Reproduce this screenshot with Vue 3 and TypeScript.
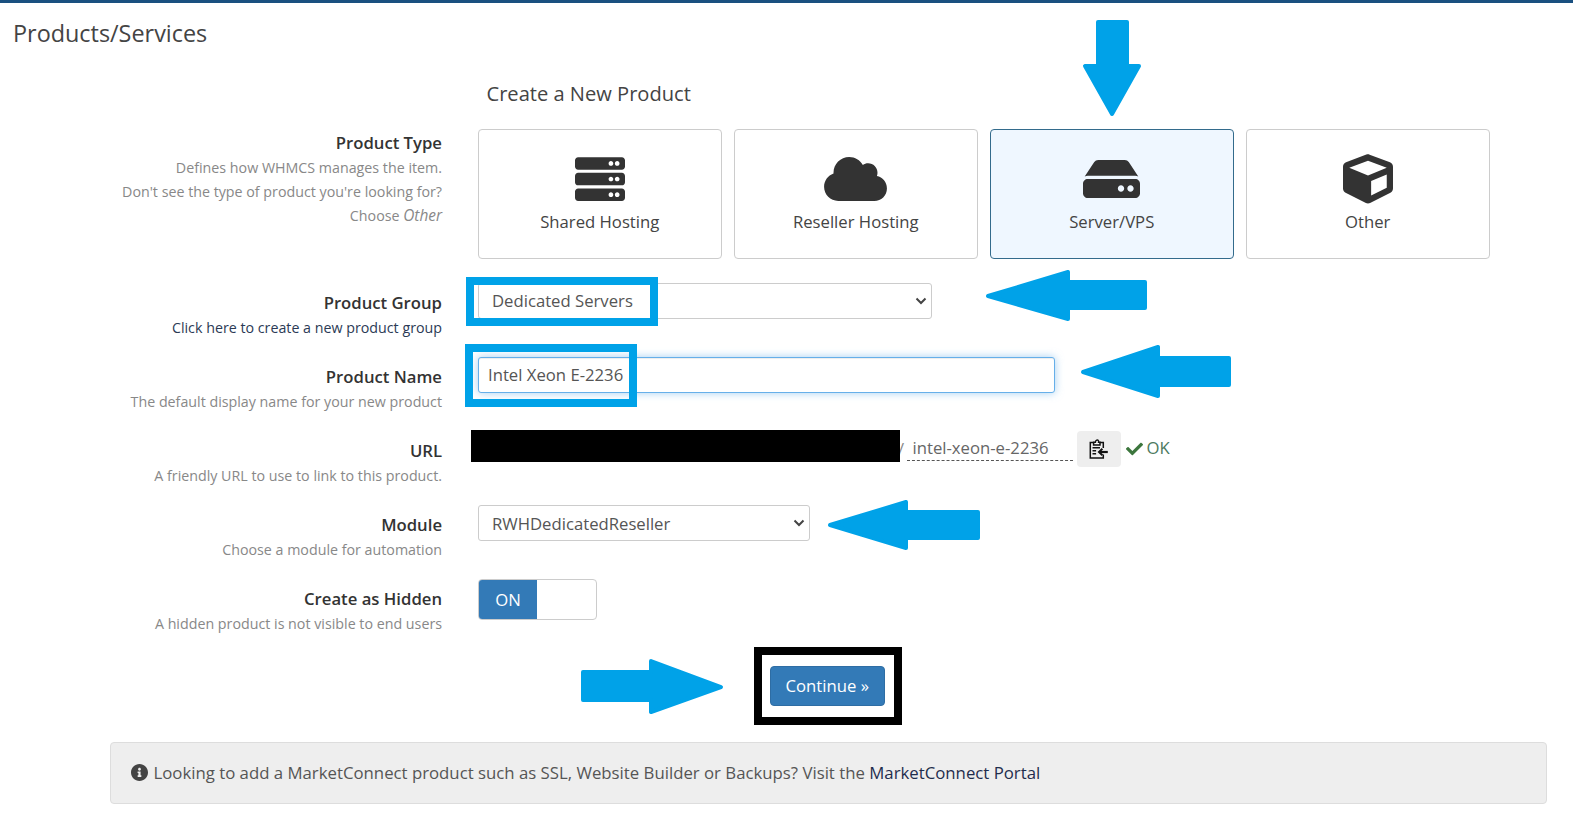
<script setup lang="ts">
interface Card { label: string; icon: string; view: string; w: number; h: number; active?: boolean }
const server = "M480 160H32c-17.673 0-32-14.327-32-32V64c0-17.673 14.327-32 32-32h448c17.673 0 32 14.327 32 32v64c0 17.673-14.327 32-32 32zm-48-88c-13.255 0-24 10.745-24 24s10.745 24 24 24 24-10.745 24-24-10.745-24-24-24zm-64 0c-13.255 0-24 10.745-24 24s10.745 24 24 24 24-10.745 24-24-10.745-24-24-24zm112 248H32c-17.673 0-32-14.327-32-32v-64c0-17.673 14.327-32 32-32h448c17.673 0 32 14.327 32 32v64c0 17.673-14.327 32-32 32zm-48-88c-13.255 0-24 10.745-24 24s10.745 24 24 24 24-10.745 24-24-10.745-24-24-24zm-64 0c-13.255 0-24 10.745-24 24s10.745 24 24 24 24-10.745 24-24-10.745-24-24-24zm112 248H32c-17.673 0-32-14.327-32-32v-64c0-17.673 14.327-32 32-32h448c17.673 0 32 14.327 32 32v64c0 17.673-14.327 32-32 32zm-48-88c-13.255 0-24 10.745-24 24s10.745 24 24 24 24-10.745 24-24-10.745-24-24-24zm-64 0c-13.255 0-24 10.745-24 24s10.745 24 24 24 24-10.745 24-24-10.745-24-24-24z";
const cloud = "M537.6 226.6c4.1-10.7 6.4-22.4 6.4-34.6 0-53-43-96-96-96-19.7 0-38.1 6-53.3 16.2C367 64.2 315.3 32 256 32c-88.4 0-160 71.6-160 160 0 2.7.1 5.4.2 8.1C40.2 219.8 0 273.2 0 336c0 79.5 64.5 144 144 144h368c70.7 0 128-57.3 128-128 0-61.9-44-113.6-102.4-125.4z";
const hdd = "M576 304v96c0 26.51-21.49 48-48 48H48c-26.51 0-48-21.49-48-48v-96c0-26.51 21.49-48 48-48h480c26.51 0 48 21.49 48 48zm-48-80a79.557 79.557 0 0 1 30.777 6.165L462.25 85.374A48.003 48.003 0 0 0 422.311 64H153.689a48 48 0 0 0-39.938 21.374L17.223 230.165A79.557 79.557 0 0 1 48 224h480zm-48 96c-17.673 0-32 14.327-32 32s14.327 32 32 32 32-14.327 32-32-14.327-32-32-32zm-96 0c-17.673 0-32 14.327-32 32s14.327 32 32 32 32-14.327 32-32-14.327-32-32-32z";
const cube = "M239.1 6.3l-208 78c-18.7 7-31.1 25-31.1 45v225.1c0 18.2 10.3 34.8 26.5 42.9l208 104c13.5 6.8 29.4 6.8 42.9 0l208-104c16.3-8.1 26.5-24.8 26.5-42.9V129.3c0-20-12.4-37.9-31.1-44.9l-208-78C262 2.2 250 2.2 239.1 6.3zM256 68.4l192 72v1.1l-192 78-192-78v-1.1l192-72zm32 356V275.5l160-65v133.9l-160 80z";
const cards: Card[] = [
  { label: "Shared Hosting", icon: server, view: "0 32 512 448", w: 50, h: 44 },
  { label: "Reseller Hosting", icon: cloud, view: "0 32 640 448", w: 63, h: 44 },
  { label: "Server/VPS", icon: hdd, view: "0 64 576 384", w: 57, h: 38, active: true },
  { label: "Other", icon: cube, view: "0 0 512 512", w: 50, h: 50 },
];
const arrows: string[] = [
  "1098,22 1127,22 1127,66 1139,66 1112,114 1085,66 1098,66",
  "988,296 1068,272 1068,282 1145,282 1145,308 1068,308 1068,319",
  "1083,372 1158,347 1158,358 1229,358 1229,385 1158,385 1158,396",
  "830,525 906,502 906,512 978,512 978,538 906,538 906,548",
  "583,672 651,672 651,661 721,687 651,712 651,700 583,700",
];
</script>

<template>
  <div class="page">
    <div class="topbar"></div>
    <h1 class="title">Products/Services</h1>
    <h2 class="subtitle">Create a New Product</h2>

    <div class="row row-type">
      <div class="lab">
        <div class="lab-title">Product Type</div>
        <div class="lab-desc">Defines how WHMCS manages the item.</div>
        <div class="lab-desc">Don't see the type of product you're looking for?</div>
        <div class="lab-desc">Choose <em>Other</em></div>
      </div>
      <div class="cards">
        <div v-for="c in cards" :key="c.label" class="card" :class="{ active: c.active }">
          <div class="card-icon">
            <svg :width="c.w" :height="c.h" :viewBox="c.view" fill="#333"><path :d="c.icon" /></svg>
          </div>
          <div class="card-label">{{ c.label }}</div>
        </div>
      </div>
    </div>

    <div class="row">
      <div class="lab">
        <div class="lab-title">Product Group</div>
        <div class="lab-desc link">Click here to create a new product group</div>
      </div>
      <select class="ctl sel-group"><option>Dedicated Servers</option></select>
    </div>

    <div class="row">
      <div class="lab">
        <div class="lab-title">Product Name</div>
        <div class="lab-desc">The default display name for your new product</div>
      </div>
      <input class="ctl inp-name" type="text" value="Intel Xeon E-2236" />
    </div>

    <div class="row">
      <div class="lab">
        <div class="lab-title">URL</div>
        <div class="lab-desc">A friendly URL to use to link to this product.</div>
      </div>
      <div class="url">
        <div class="redact"></div>
        <span class="slash">/</span>
        <span class="slug">intel-xeon-e-2236</span>
        <button class="copy" type="button" aria-label="Copy">
          <svg width="19" height="20" viewBox="0 0 19 20" fill="none" stroke="#111" stroke-width="1.5">
            <path d="M4.6 3.5H1.3v15.4h13v-3.4M14.3 9V3.5H11" />
            <path d="M4.6 6V3.2h1.8a2 2 0 0 1 2.6-2 2 2 0 0 1 .6 2H11V6z" fill="#fff" />
            <path d="M3.5 8.8h7.5M3.5 11.8h3.6M3.5 14.8h3.6" />
            <path d="M18.8 13H10.5" stroke-width="2.2" />
            <path d="M13.4 9.8L10 13l3.4 3.2" stroke-width="2" />
          </svg>
        </button>
        <svg class="check" width="17" height="14" viewBox="0 60 512 392" fill="#3c763d"><path d="M173.898 439.404l-166.4-166.4c-9.997-9.997-9.997-26.206 0-36.204l36.203-36.204c9.997-9.998 26.207-9.998 36.204 0L192 312.69 432.095 72.596c9.997-9.997 26.207-9.997 36.204 0l36.203 36.204c9.997 9.997 9.997 26.206 0 36.204l-294.4 294.401c-9.998 9.997-26.207 9.997-36.204-.001z" /></svg>
        <span class="ok">OK</span>
      </div>
    </div>

    <div class="row">
      <div class="lab">
        <div class="lab-title">Module</div>
        <div class="lab-desc">Choose a module for automation</div>
      </div>
      <select class="ctl sel-module"><option>RWHDedicatedReseller</option></select>
    </div>

    <div class="row">
      <div class="lab">
        <div class="lab-title">Create as Hidden</div>
        <div class="lab-desc">A hidden product is not visible to end users</div>
      </div>
      <div class="toggle">
        <span class="toggle-on">ON</span>
      </div>
    </div>

    <div class="actions">
      <button class="continue" type="button">Continue »</button>
    </div>

    <div class="info">
      <svg width="17" height="17" viewBox="8 8 496 496" fill="#444"><path d="M256 8C119.043 8 8 119.083 8 256c0 136.997 111.043 248 248 248s248-111.003 248-248C504 119.083 392.957 8 256 8zm0 110c23.196 0 42 18.804 42 42s-18.804 42-42 42-42-18.804-42-42 18.804-42 42-42zm56 254c0 6.627-5.373 12-12 12h-88c-6.627 0-12-5.373-12-12v-24c0-6.627 5.373-12 12-12h12v-64h-12c-6.627 0-12-5.373-12-12v-24c0-6.627 5.373-12 12-12h64c6.627 0 12 5.373 12 12v100h12c6.627 0 12 5.373 12 12v24z" /></svg>
      <span class="info-text">Looking to add a MarketConnect product such as SSL, Website Builder or Backups? Visit the <span class="portal">MarketConnect Portal</span></span>
    </div>

    <div class="mark mark-group"></div>
    <div class="mark mark-name"></div>
    <div class="mark mark-continue"></div>
    <svg class="arrows" width="1573" height="829" viewBox="0 0 1573 829">
      <polygon v-for="(p, i) in arrows" :key="i" :points="p" fill="#00a2e8" stroke="#00a2e8" stroke-width="4" stroke-linejoin="round" />
    </svg>
  </div>
</template>

<style>
html, body { margin: 0; background: #fff; }
</style>

<style scoped>
.page {
  position: relative;
  width: 1573px;
  height: 829px;
  overflow: hidden;
  background: #fff;
  font-family: "Open Sans", "Liberation Sans", sans-serif;
  font-size: 16.7px;
  color: #555;
}
.topbar { height: 3px; background: #1a5080; }
.title {
  margin: 13.5px 0 0 13px;
  font-size: 23.4px;
  line-height: 32px;
  font-weight: 400;
  color: #444;
}
.subtitle {
  margin: 31px 0 21.5px 486.5px;
  font-size: 20.1px;
  line-height: 28px;
  font-weight: 400;
  color: #444;
}
.row {
  display: flex;
  align-items: flex-start;
  gap: 36px;
  height: 74.2px;
}
.row-type { height: auto; margin-bottom: 23.5px; }
.lab {
  flex: 0 0 442px;
  padding-top: 7.5px;
  text-align: right;
  box-sizing: border-box;
}
.row-type .lab { padding-top: 0.5px; }
.lab-title { font-size: 16.7px; line-height: 26px; font-weight: 600; color: #333; }
.lab-desc { font-size: 14.25px; line-height: 24px; color: #888; }
.lab-desc em { font-size: 15.4px; }
.lab-desc.link { color: #2b3a55; }
.cards { display: flex; gap: 12.5px; }
.card {
  width: 243.5px;
  height: 129.5px;
  box-sizing: border-box;
  border: 1px solid #ccc;
  border-radius: 4px;
  background: #fff;
  text-align: center;
}
.card.active { background: #eff7ff; border-color: #336b8c; }
.card-icon {
  height: 50px;
  margin-top: 24px;
  display: flex;
  align-items: center;
  justify-content: center;
}
.card-label { margin-top: 6px; line-height: 24px; color: #444; }
.ctl {
  display: block;
  box-sizing: border-box;
  margin: 1px 0 0;
  height: 35.5px;
  font-family: inherit;
  font-size: 16.7px;
  color: #555;
  background: #fff;
  border: 1px solid #ccc;
  border-radius: 3px;
  outline: none;
}
.sel-group, .sel-module {
  appearance: none;
  padding: 0 26px 0 13px;
  background: #fff url("data:image/svg+xml,%3Csvg xmlns='http://www.w3.org/2000/svg' width='12' height='8' viewBox='0 0 12 8'%3E%3Cpath d='M1.5 1.5L6 6l4.5-4.5' fill='none' stroke='%23444' stroke-width='2'/%3E%3C/svg%3E") no-repeat right 4px center;
}
.sel-group { width: 454px; }
.sel-module { width: 332px; margin-top: 0; height: 36px; padding-top: 1px; }
.inp-name {
  width: 577px;
  padding: 0 9px;
  border-color: #66afe9;
  box-shadow: inset 0 1px 1px rgba(0, 0, 0, 0.075), 0 0 8px rgba(102, 175, 233, 0.6);
}
.url { display: flex; align-items: flex-start; margin-left: -7px; }
.redact { position: relative; z-index: 1; width: 429px; height: 32px; background: #000; }
.slash { width: 6.5px; margin: 7px 0 0 -2px; padding-right: 2px; line-height: 24px; color: #888; }
.slug {
  box-sizing: border-box;
  width: 166px;
  height: 31px;
  padding: 5px 0 0 6px;
  line-height: 25px;
  color: #666;
  border-bottom: 1px dashed #555;
}
.copy {
  width: 44px;
  height: 36px;
  margin: 1px 0 0 4px;
  padding: 0;
  border: 0;
  border-radius: 4px;
  background: #eee;
  display: flex;
  align-items: center;
  justify-content: center;
}
.check { margin: 12px 0 0 5px; }
.ok { margin: 6px 0 0 4px; line-height: 24px; color: #4c7a60; }
.toggle {
  box-sizing: border-box;
  width: 119px;
  height: 41px;
  border: 1px solid #ccc;
  border-radius: 4px;
  background: #fff;
  overflow: hidden;
}
.toggle-on {
  display: block;
  width: 58px;
  height: 100%;
  background: #337ab7;
  color: #fff;
  text-align: center;
  line-height: 39px;
  font-weight: 500;
}
.actions { margin: 13px 0 0 769.5px; }
.continue {
  display: block;
  width: 115.5px;
  height: 40px;
  padding: 0;
  border: 1px solid #2e6da4;
  border-radius: 4px;
  background: #337ab7;
  color: #fff;
  font-family: inherit;
  font-size: 16.7px;
}
.info {
  box-sizing: border-box;
  display: flex;
  align-items: center;
  gap: 6px;
  width: 1437px;
  height: 62px;
  margin: 36.5px 0 0 110px;
  padding: 0 0 2px 19.5px;
  background: #eee;
  border: 1px solid #ddd;
  border-radius: 4px;
  color: #555;
  font-size: 16.77px;
}
.portal { color: #1f2d4d; }
.mark { position: absolute; box-sizing: border-box; border: 8px solid #00a2e8; pointer-events: none; }
.mark-group { left: 466px; top: 277px; width: 192px; height: 49px; }
.mark-name { left: 465px; top: 344px; width: 172px; height: 63px; }
.mark-continue { left: 753.5px; top: 647px; width: 148.5px; height: 78px; border-color: #000; }
.arrows { position: absolute; left: 0; top: 0; pointer-events: none; }
</style>
